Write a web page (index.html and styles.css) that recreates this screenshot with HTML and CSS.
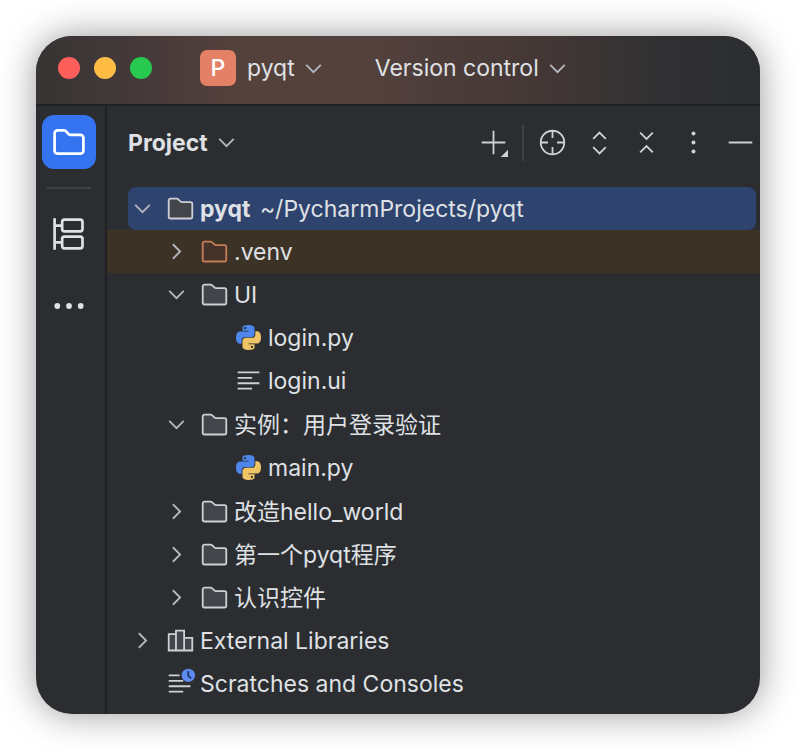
FILE: index.html
```html
<!DOCTYPE html>
<html lang="zh-CN">
<head>
    <meta charset="UTF-8">
    <meta name="viewport" content="width=device-width, initial-scale=1.0">
    <title>pyqt</title>
    <link rel="stylesheet" href="styles.css">
</head>
<body>
    <!-- shared icons -->
    <svg class="sprite" aria-hidden="true">
        <symbol id="down" viewBox="0 0 16 16"><path d="M4 6l4 4 4-4" fill="none" stroke="currentColor"/></symbol>
        <symbol id="right" viewBox="0 0 16 16"><path d="M6 4l4 4-4 4" fill="none" stroke="currentColor"/></symbol>
        <symbol id="folder" viewBox="0 0 16 16">
            <path d="M1.5 12.500V3.500a1 1 0 0 1 1-1h3.400a1 1 0 0 1 .7.3l1.500 1.400a1 1 0 0 0 .7.3H13.500a1 1 0 0 1 1 1v7a1 1 0 0 1-1 1h-11a1 1 0 0 1-1-1z"/>
        </symbol>
        <symbol id="lines" viewBox="0 0 16 16">
            <path d="M2 3.500h12M2 6.500h8M2 9.500h12M2 12.500h8" fill="none" stroke="currentColor"/>
        </symbol>
        <symbol id="python" viewBox="-2 -2 28 28">
            <path d="M14.25.18l.9.2.73.26.59.3.45.32.34.34.25.34.16.33.1.3.04.26.02.2-.01.13V8.5l-.05.63-.13.55-.21.46-.26.38-.3.31-.33.25-.35.19-.35.14-.33.1-.3.07-.26.04-.21.02H8.77l-.69.05-.59.14-.5.22-.41.27-.33.32-.27.35-.2.36-.15.37-.1.35-.07.32-.04.27-.02.21v3.06H3.17l-.21-.03-.28-.07-.32-.12-.35-.18-.36-.26-.36-.36-.35-.46-.32-.59-.28-.73-.21-.88-.14-1.05-.05-1.23.06-1.22.16-1.04.24-.87.32-.71.36-.57.4-.44.42-.33.42-.24.4-.16.36-.1.32-.05.24-.01h.16l.06.01h8.16v-.83H6.18l-.01-2.75-.02-.37.05-.34.11-.31.17-.28.25-.26.31-.23.38-.2.44-.18.51-.15.58-.12.64-.1.71-.06.77-.04.84-.02 1.27.05zm-6.3 1.98l-.23.33-.08.41.08.41.23.34.33.22.41.09.41-.09.33-.22.23-.34.08-.41-.08-.41-.23-.33-.33-.22-.41-.09-.41.09z" fill="#4f86ec"/>
            <path transform="rotate(180 12 12)" d="M14.25.18l.9.2.73.26.59.3.45.32.34.34.25.34.16.33.1.3.04.26.02.2-.01.13V8.5l-.05.63-.13.55-.21.46-.26.38-.3.31-.33.25-.35.19-.35.14-.33.1-.3.07-.26.04-.21.02H8.77l-.69.05-.59.14-.5.22-.41.27-.33.32-.27.35-.2.36-.15.37-.1.35-.07.32-.04.27-.02.21v3.06H3.17l-.21-.03-.28-.07-.32-.12-.35-.18-.36-.26-.36-.36-.35-.46-.32-.59-.28-.73-.21-.88-.14-1.05-.05-1.23.06-1.22.16-1.04.24-.87.32-.71.36-.57.4-.44.42-.33.42-.24.4-.16.36-.1.32-.05.24-.01h.16l.06.01h8.16v-.83H6.18l-.01-2.75-.02-.37.05-.34.11-.31.17-.28.25-.26.31-.23.38-.2.44-.18.51-.15.58-.12.64-.1.71-.06.77-.04.84-.02 1.27.05zm-6.3 1.98l-.23.33-.08.41.08.41.23.34.33.22.41.09.41-.09.33-.22.23-.34.08-.41-.08-.41-.23-.33-.33-.22-.41-.09-.41.09z" fill="#eec466"/>
        </symbol>
    </svg>

    <div class="window">
        <header class="titlebar">
            <div class="lights">
                <button class="light red" aria-label="Close"></button>
                <button class="light yellow" aria-label="Minimize"></button>
                <button class="light green" aria-label="Zoom"></button>
            </div>
            <button class="menu">
                <span class="badge">P</span>
                <span>pyqt</span>
                <svg class="icon"><use href="#down"/></svg>
            </button>
            <button class="menu">
                <span>Version control</span>
                <svg class="icon"><use href="#down"/></svg>
            </button>
        </header>

        <div class="main">
            <nav class="sidebar">
                <button class="side-btn active" aria-label="Project">
                    <svg viewBox="0 0 20 20"><path d="M2 14.800V5.200A1.700 1.700 0 0 1 3.700 3.500h3.500a1.200 1.200 0 0 1 .8.3l1.900 1.900a1.200 1.200 0 0 0 .8.3h5.600A1.700 1.700 0 0 1 18 7.700v7.100a1.700 1.700 0 0 1-1.700 1.700H3.700A1.700 1.700 0 0 1 2 14.800z"/></svg>
                </button>
                <hr>
                <button class="side-btn" aria-label="Structure">
                    <svg viewBox="0 0 20 20"><path d="M2 1.300v17.400M2 5.400h4M2 14.600h4"/><rect x="6.200" y="2" width="11.300" height="6.500" rx="1.300"/><rect x="6.200" y="11.500" width="11.300" height="6.500" rx="1.300"/></svg>
                </button>
                <button class="side-btn" aria-label="More tool windows">
                    <svg class="dots" viewBox="0 0 20 20"><circle cx="3.500" cy="10" r="1.600"/><circle cx="10" cy="10" r="1.600"/><circle cx="16.500" cy="10" r="1.600"/></svg>
                </button>
            </nav>

            <section class="panel">
                <div class="panel-head">
                    <button class="title">
                        <span>Project</span>
                        <svg class="icon"><use href="#down"/></svg>
                    </button>
                    <div class="tools">
                        <button aria-label="New">
                            <svg class="icon" viewBox="0 0 16 16"><path d="M8 1.500v13M1.500 8h13"/><path class="solid" d="M16 12v4h-4z"/></svg>
                        </button>
                        <span class="divider"></span>
                        <button aria-label="Select opened file">
                            <svg class="icon" viewBox="0 0 16 16"><circle cx="8" cy="8" r="6.500"/><path d="M8 1.500v4M8 10.500v4M1.500 8h4M10.500 8h4"/></svg>
                        </button>
                        <button aria-label="Expand all">
                            <svg class="icon" viewBox="0 0 16 16"><path d="M4.500 6L8 2.500 11.500 6M4.500 10.500L8 14l3.500-3.500"/></svg>
                        </button>
                        <button aria-label="Collapse all">
                            <svg class="icon" viewBox="0 0 16 16"><path d="M4.500 2.500L8 6l3.500-3.500M4.500 13.500L8 10l3.500 3.500"/></svg>
                        </button>
                        <button aria-label="Options">
                            <svg class="icon" viewBox="0 0 16 16"><circle class="solid" cx="8" cy="3" r="1.100"/><circle class="solid" cx="8" cy="8" r="1.100"/><circle class="solid" cx="8" cy="13" r="1.100"/></svg>
                        </button>
                        <button aria-label="Hide">
                            <svg class="icon" viewBox="0 0 16 16"><path d="M1.500 8h13"/></svg>
                        </button>
                    </div>
                </div>

                <ul class="tree">
                    <li>
                        <div class="row selected">
                            <svg class="icon arrow"><use href="#down"/></svg>
                            <svg class="icon folder"><use href="#folder"/></svg>
                            <span><b>pyqt</b> <span class="path">~/PycharmProjects/pyqt</span></span>
                        </div>
                        <ul class="level1">
                            <li>
                                <div class="row excluded">
                                    <svg class="icon arrow"><use href="#right"/></svg>
                                    <svg class="icon folder"><use href="#folder"/></svg>
                                    <span>.venv</span>
                                </div>
                            </li>
                            <li>
                                <div class="row">
                                    <svg class="icon arrow"><use href="#down"/></svg>
                                    <svg class="icon folder"><use href="#folder"/></svg>
                                    <span>UI</span>
                                </div>
                                <ul class="level2">
                                    <li class="row">
                                        <svg class="icon"><use href="#python"/></svg>
                                        <span>login.py</span>
                                    </li>
                                    <li class="row">
                                        <svg class="icon"><use href="#lines"/></svg>
                                        <span>login.ui</span>
                                    </li>
                                </ul>
                            </li>
                            <li>
                                <div class="row">
                                    <svg class="icon arrow"><use href="#down"/></svg>
                                    <svg class="icon folder"><use href="#folder"/></svg>
                                    <span>实例：用户登录验证</span>
                                </div>
                                <ul class="level2">
                                    <li class="row">
                                        <svg class="icon"><use href="#python"/></svg>
                                        <span>main.py</span>
                                    </li>
                                </ul>
                            </li>
                            <li>
                                <div class="row">
                                    <svg class="icon arrow"><use href="#right"/></svg>
                                    <svg class="icon folder"><use href="#folder"/></svg>
                                    <span>改造hello_world</span>
                                </div>
                            </li>
                            <li>
                                <div class="row">
                                    <svg class="icon arrow"><use href="#right"/></svg>
                                    <svg class="icon folder"><use href="#folder"/></svg>
                                    <span>第一个pyqt程序</span>
                                </div>
                            </li>
                            <li>
                                <div class="row">
                                    <svg class="icon arrow"><use href="#right"/></svg>
                                    <svg class="icon folder"><use href="#folder"/></svg>
                                    <span>认识控件</span>
                                </div>
                            </li>
                        </ul>
                    </li>
                    <li>
                        <div class="row">
                            <svg class="icon arrow"><use href="#right"/></svg>
                            <svg class="icon library" viewBox="0 0 16 16"><path d="M1.500 4.500h4v9h-4zM5.500 2.500h4.500v11H5.500zM10 6.500h4.500v7H10z"/></svg>
                            <span>External Libraries</span>
                        </div>
                    </li>
                    <li>
                        <div class="row leaf">
                            <svg class="icon" viewBox="0 0 16 16">
                                <path d="M1.500 3.500h6M1.500 6.500h8M1.500 9.500h12M1.500 12.500h8" fill="none" stroke="currentColor"/>
                                <circle cx="12.300" cy="3.500" r="3.700" fill="#5c8af0"/>
                                <path d="M12.300 1.300v2.500l1.600 1.400" fill="none" stroke="#1d3566"/>
                            </svg>
                            <span>Scratches and Consoles</span>
                        </div>
                    </li>
                </ul>
            </section>
        </div>
    </div>
</body>
</html>
```

FILE: styles.css
```css
* {
    box-sizing: border-box;
}
body {
    margin: 0;
    padding: 36px;
    background-color: #ffffff;
    color: #dfe1e5;
    font-family: Inter, 'Noto Sans CJK SC', sans-serif;
    font-size: 23px;
    line-height: 28px;
}
button {
    display: flex;
    align-items: center;
    padding: 0;
    border: none;
    background: none;
    color: inherit;
    font: inherit;
    cursor: pointer;
}
ul {
    list-style: none;
    margin: 0;
    padding: 0;
}
.sprite {
    position: absolute;
    width: 0;
    height: 0;
}
.icon {
    display: block;
    width: 29px;
    height: 29px;
    flex-shrink: 0;
    overflow: visible;
}
.window {
    border-radius: 36px;
    overflow: hidden;
    background-color: #2b2d30;
    box-shadow: 0 0 36px rgba(0, 0, 0, 0.4);
}

/* title bar */
.titlebar {
    display: flex;
    align-items: center;
    height: 70px;
    padding: 0 22px 4px;
    border-bottom: 2px solid #1f2023;
    background: linear-gradient(90deg, #373433 0%, #45393a 14%, #54413b 28%, #52403c 48%, #433735 70%, #313133 86%, #2b2d30 100%);
    white-space: nowrap;
}
.lights {
    display: flex;
    gap: 14px;
    margin-right: 48px;
}
.light {
    width: 22px;
    height: 22px;
    border-radius: 50%;
}
.red {
    background-color: #fe5f5a;
}
.yellow {
    background-color: #febc45;
}
.green {
    background-color: #27c94f;
}
.menu {
    margin-right: 47px;
}
.menu .icon, .title .icon {
    margin-left: 4px;
    color: #b4b8bf;
}
.badge {
    width: 36px;
    height: 36px;
    margin-right: 11px;
    border-radius: 7px;
    background-color: #e48065;
    color: #ffffff;
    font-weight: 500;
    line-height: 36px;
    text-align: center;
}

/* left tool strip */
.main {
    display: flex;
}
.sidebar {
    flex: 0 0 71px;
    display: flex;
    flex-direction: column;
    gap: 18px;
    padding: 9px 9px 0 6px;
    border-right: 2px solid #1f2023;
}
.sidebar hr {
    width: 44px;
    height: 2px;
    margin: 0 5px;
    border: none;
    background-color: #3f4145;
}
.side-btn {
    width: 54px;
    height: 54px;
    justify-content: center;
    border-radius: 12px;
}
.side-btn.active {
    background-color: #3574f0;
    color: #ffffff;
}
.side-btn svg {
    width: 36px;
    height: 36px;
    fill: none;
    stroke: currentColor;
    stroke-width: 1.5;
}
.side-btn .dots {
    fill: currentColor;
    stroke: none;
}

/* project panel */
.panel {
    flex: 1;
    min-width: 0;
    padding-bottom: 9px;
}
.panel-head {
    display: flex;
    align-items: center;
    justify-content: space-between;
    height: 81px;
    padding: 0 5px 8px 21px;
}
.title {
    font-weight: 700;
}
.tools {
    display: flex;
    align-items: center;
    gap: 18px;
    color: #ced0d6;
}
.tools .icon {
    fill: none;
    stroke: currentColor;
}
.tools .solid {
    fill: currentColor;
    stroke: none;
}
.divider {
    width: 2px;
    height: 36px;
    margin: 0 -4px;
    background-color: #3f4145;
}
.row {
    display: flex;
    align-items: center;
    height: 43px;
    padding-left: 21px;
    white-space: nowrap;
}
.level1 .row {
    padding-left: 55px;
}
.level2 {
    margin-bottom: 1px;
}
.level2 .row {
    padding-left: 127px;
}
.leaf {
    padding-left: 59px;
}
.row .icon {
    margin-right: 5px;
    color: #ced0d6;
}
.row .arrow {
    margin-right: 9px;
    color: #b4b8bf;
}
.selected {
    margin: 0 4px 0 21px;
    padding-left: 0;
    border-radius: 8px;
    background-color: #2e436e;
}
.path {
    margin-left: 3px;
}
.excluded {
    background-color: #3d3226;
}
.folder, .library {
    fill: #43454a;
    stroke: #ced0d6;
}
.excluded .folder {
    fill: #45322b;
    stroke: #c77d55;
}
```
